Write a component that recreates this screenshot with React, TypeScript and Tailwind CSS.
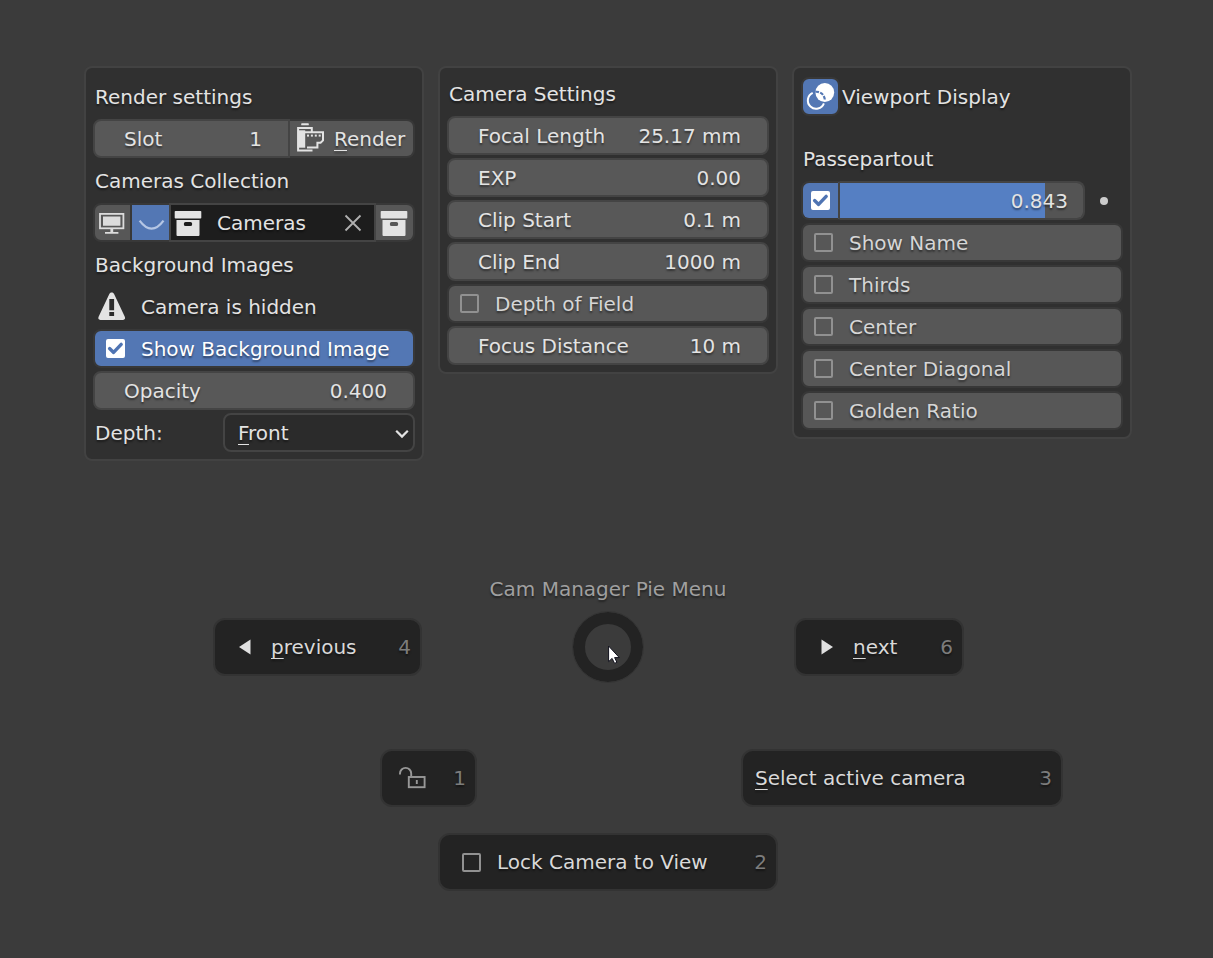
import React, { useState } from "react";
import type { ReactNode } from "react";

const shadow = "[text-shadow:0_2px_2px_rgba(0,0,0,0.45)]";

function Panel({ children, tight = false }: { children: ReactNode; tight?: boolean }) {
  return (
    <section
      className={`rounded-lg border-2 border-[#424242] bg-[#303030] px-[7px] pb-[5px] ${tight ? "pt-[5px]" : "pt-2"}`}
    >
      {children}
    </section>
  );
}

function Row({ children }: { children: ReactNode }) {
  return <div className="flex h-[42px] items-center pb-px">{children}</div>;
}

function Heading({ children }: { children: ReactNode }) {
  return (
    <Row>
      <h2 className="pl-0.5">{children}</h2>
    </Row>
  );
}

function Key({ children }: { children: ReactNode }) {
  return (
    <span className="underline decoration-1 underline-offset-4 [text-decoration-skip-ink:none]">{children}</span>
  );
}

function NumberField({ id, label, value, joined = false }: { id: string; label: string; value: string; joined?: boolean }) {
  const [v, setV] = useState(value);
  return (
    <div
      className={`flex h-[39px] min-w-0 flex-1 items-center border-2 border-[#444444] bg-[#585858] pr-[26px] pl-[29px] ${
        joined ? "rounded-l-lg" : "rounded-lg"
      }`}
    >
      <label htmlFor={id} className="shrink-0">
        {label}
      </label>
      <input
        id={id}
        value={v}
        onChange={(e) => setV(e.target.value)}
        className={`w-0 min-w-0 flex-1 bg-transparent text-right outline-none ${shadow}`}
      />
    </div>
  );
}

function Tick({ id, checked, onChange, label }: { id: string; checked: boolean; onChange: (c: boolean) => void; label?: string }) {
  return (
    <span className="grid size-[19px] shrink-0">
      <input
        id={id}
        type="checkbox"
        aria-label={label}
        checked={checked}
        onChange={(e) => onChange(e.target.checked)}
        className="col-start-1 row-start-1 size-[19px] appearance-none rounded-xs border-2 border-[#919191] checked:border-white checked:bg-white"
      />
      {checked && (
        <svg viewBox="0 0 19 19" className="pointer-events-none col-start-1 row-start-1 size-[19px]" fill="none">
          <path d="M3.6 9.6 7.6 13.4 15.2 5.4" stroke="#4f74b3" strokeWidth="3.4" strokeLinecap="round" strokeLinejoin="round" />
        </svg>
      )}
    </span>
  );
}

function Toggle({ id, label, initial = false }: { id: string; label: string; initial?: boolean }) {
  const [on, setOn] = useState(initial);
  return (
    <label
      htmlFor={id}
      className={`flex h-[39px] flex-1 items-center gap-4 rounded-lg border-2 border-[#383838] pl-[11px] ${
        on ? "bg-[#5377b4] text-white" : "bg-[#575757] text-[#d6d6d6]"
      }`}
    >
      <Tick id={id} checked={on} onChange={setOn} />
      {label}
    </label>
  );
}

function ArchiveIcon() {
  return (
    <svg viewBox="0 0 35 35" className="mx-auto size-[35px] shrink-0" fill="#e3e3e3">
      <rect x="3.7" y="6" width="26.6" height="7.600" rx="0.8" />
      <path
        fillRule="evenodd"
        d="M5.500 15h23v15a1 1 0 0 1-1 1h-21a1 1 0 0 1-1-1zM14.500 17a1.600 1.600 0 0 0-1.600 1.600v.8a1.600 1.600 0 0 0 1.600 1.600h5a1.600 1.600 0 0 0 1.600-1.600v-.8a1.600 1.600 0 0 0-1.600-1.600z"
      />
    </svg>
  );
}

function RenderIcon() {
  return (
    <svg viewBox="0 0 35 35" className="size-[35px] shrink-0">
      <g fill="#e3e3e3">
        <rect x="11.2" y="2.3" width="7.6" height="2" rx="0.6" />
        <rect x="7.6" y="9.3" width="7.6" height="17.4" />
        <rect x="17" y="13.6" width="2" height="2" />
        <rect x="20.900" y="13.600" width="2" height="2" />
        <rect x="24.800" y="13.600" width="2" height="2" />
        <rect x="28.700" y="13.600" width="2" height="2" />
      </g>
      <g fill="none" stroke="#e3e3e3" strokeWidth="2">
        <path d="M21.800 11V7H8.100v22.400h14.400" />
        <path d="M15 11.200h18v8.200l-2.400 2.400h-3.200v4.600H17" />
      </g>
    </svg>
  );
}

function PieButton({
  hotkey,
  label,
  children,
  className = "",
}: {
  hotkey: string;
  label?: string;
  children: ReactNode;
  className?: string;
}) {
  return (
    <button
      type="button"
      aria-label={label}
      className={`flex h-[58px] items-center justify-between rounded-xl border-2 border-[#333333] bg-[#232323] pr-[9px] text-[#d9d9d9] ${shadow} ${className}`}
    >
      <span className="flex items-center">{children}</span>
      <span className="text-[#7c7c7c]">{hotkey}</span>
    </button>
  );
}

function PieToggle() {
  const [on, setOn] = useState(false);
  return (
    <div className="flex h-[58px] w-[340px] items-center justify-between rounded-xl border-2 border-[#333333] bg-[#232323] pr-[9px] pl-[22px] text-[#d9d9d9]">
      <label htmlFor="lock-view" className="flex items-center gap-4">
        <Tick id="lock-view" checked={on} onChange={setOn} />
        Lock Camera to View
      </label>
      <span className="text-[#7c7c7c]">2</span>
    </div>
  );
}

function Passepartout() {
  const [on, setOn] = useState(true);
  const [amount, setAmount] = useState(0.843);
  const pct = `${amount * 100}%`;
  return (
    <Row>
      <label
        htmlFor="passepartout"
        className="flex h-[39px] w-[39px] items-center justify-center rounded-l-lg border-2 border-[#383838] border-r-[#444444] bg-[#5377b4]"
      >
        <Tick id="passepartout" label="Passepartout" checked={on} onChange={setOn} />
      </label>
      <div className="grid h-[39px] flex-1 overflow-hidden rounded-r-lg border-2 border-l-0 border-[#444444] bg-[#545454]">
        <input
          type="range"
          aria-label="Passepartout opacity"
          min={0}
          max={1}
          step={0.001}
          value={amount}
          onChange={(e) => setAmount(Number(e.target.value))}
          style={{ backgroundImage: `linear-gradient(to right, #557fc3 ${pct}, #545454 ${pct})` }}
          className="col-start-1 row-start-1 h-[35px] w-full appearance-none [&::-webkit-slider-thumb]:opacity-0"
        />
        <span className="pointer-events-none col-start-1 row-start-1 self-center pr-[15px] text-right">
          {amount.toFixed(3)}
        </span>
      </div>
      <button type="button" aria-label="Animate property" className="flex h-9 w-[38px] items-center justify-center">
        <span className="size-2 rounded-full bg-[#cccccc]" />
      </button>
    </Row>
  );
}

export default function App() {
  const [name, setName] = useState("Cameras");
  return (
    <main
      className={`min-h-screen bg-[#3b3b3b] pt-[66px] pb-[67px] pl-[3px] font-['DejaVu_Sans',sans-serif] text-[20px] leading-6 text-[#e3e3e3] ${shadow}`}
    >
      <div className="mx-auto grid max-w-[1048px] grid-cols-3 items-start gap-[14px]">
        <Panel>
          <Heading>Render settings</Heading>
          <Row>
            <NumberField id="slot" label="Slot" value="1" joined />
            <button
              type="button"
              className={`flex h-[39px] w-[125px] items-center gap-[9px] rounded-r-lg border-2 border-l-0 border-[#383838] bg-[#575757] ${shadow}`}
            >
              <RenderIcon />
              <span>
                <Key>R</Key>ender
              </span>
            </button>
          </Row>
          <Heading>Cameras Collection</Heading>
          <Row>
            <button
              type="button"
              aria-label="Show in viewport"
              className="h-[39px] w-[39px] rounded-l-lg border-2 border-[#383838] bg-[#575757]"
            >
              <svg viewBox="0 0 35 35" className="size-[35px]">
                <rect x="5" y="8.9" width="23.4" height="14.4" fill="none" stroke="#dcdcdc" strokeWidth="1.8" />
                <path d="M8 11.6h17.4v9.2H8zM15.4 24h2.8v3h-2.8zM10 27h13.4v1.8H10z" fill="#dcdcdc" />
              </svg>
            </button>
            <button
              type="button"
              aria-label="Hide collection"
              className="h-[39px] w-[37px] border-y-2 border-[#383838] bg-[#5377b4]"
            >
              <svg viewBox="0 0 37 35" className="h-[35px] w-[37px]" fill="none">
                <path d="M7.6 15.6C11.6 21 15 23.6 19.5 23.6S27.600 21 31.500 15.600" stroke="#b5c6e4" strokeWidth="2.2" />
              </svg>
            </button>
            <div className="flex h-[39px] min-w-0 flex-1 items-center border-2 border-[#444444] bg-[#1d1d1d] pr-3">
              <ArchiveIcon />
              <input
                aria-label="Collection"
                value={name}
                onChange={(e) => setName(e.target.value)}
                className={`w-0 min-w-0 flex-1 bg-transparent pl-[11px] outline-none ${shadow}`}
              />
              <button type="button" aria-label="Clear collection">
                <svg viewBox="0 0 18 18" className="size-[18px]">
                  <path d="M1.500 1.500 16.500 16.500M16.500 1.500 1.500 16.500" stroke="#b0b0b0" strokeWidth="1.800" />
                </svg>
              </button>
            </div>
            <button
              type="button"
              aria-label="New collection"
              className="h-[39px] w-[39px] rounded-r-lg border-2 border-l-0 border-[#383838] bg-[#575757]"
            >
              <ArchiveIcon />
            </button>
          </Row>
          <Heading>Background Images</Heading>
          <Row>
            <svg viewBox="0 0 36 36" className="ml-px size-9">
              <path
                d="M17.700 3.600c1.200 0 2 .7 2.500 1.600l10.600 22.600c.8 1.700-.1 3.100-1.700 3.100H6.300c-1.600 0-2.500-1.400-1.700-3.100L15.200 5.200c.5-.9 1.300-1.600 2.500-1.600z"
                fill="#e3e3e3"
              />
              <path d="M15.300 10h4.800v11.200h-4.800zM15.300 23h4.800v4h-4.800z" fill="#2b2b2b" />
            </svg>
            <p className="pl-[11px]">Camera is hidden</p>
          </Row>
          <Row>
            <Toggle id="show-bg" label="Show Background Image" initial />
          </Row>
          <Row>
            <NumberField id="opacity" label="Opacity" value="0.400" />
          </Row>
          <Row>
            <label htmlFor="depth" className="flex-1 pl-0.5">
              Depth:
            </label>
            <div className="relative h-[39px] w-48">
              <select
                id="depth"
                className={`h-[39px] w-full appearance-none rounded-lg border-2 border-[#444444] bg-[#2b2b2b] pl-[13px] outline-none ${shadow}`}
              >
                <option>Front</option>
                <option>Back</option>
              </select>
              <span className="pointer-events-none absolute bottom-[7px] left-[15px] h-px w-[11px] bg-[#e3e3e3]" />
              <svg viewBox="0 0 14 10" className="pointer-events-none absolute top-4 right-[6px] h-[10px] w-[14px]" fill="none">
                <path d="M1.200 1.800 7 7.600 12.800 1.800" stroke="#e3e3e3" strokeWidth="2.200" />
              </svg>
            </div>
          </Row>
        </Panel>

        <Panel tight>
          <Heading>Camera Settings</Heading>
          <Row>
            <NumberField id="focal" label="Focal Length" value="25.17 mm" />
          </Row>
          <Row>
            <NumberField id="exp" label="EXP" value="0.00" />
          </Row>
          <Row>
            <NumberField id="clip-start" label="Clip Start" value="0.1 m" />
          </Row>
          <Row>
            <NumberField id="clip-end" label="Clip End" value="1000 m" />
          </Row>
          <Row>
            <Toggle id="dof" label="Depth of Field" />
          </Row>
          <Row>
            <NumberField id="focus" label="Focus Distance" value="10 m" />
          </Row>
        </Panel>

        <Panel>
          <Row>
            <button
              type="button"
              aria-label="Overlays"
              className="size-[39px] shrink-0 rounded-lg border-2 border-[#383838] bg-[#5377b4]"
            >
              <svg viewBox="0 0 35 35" className="size-[35px]">
                <circle cx="21.800" cy="13.500" r="9.400" fill="#ffffff" />
                <path d="M9.700 13.900A8.300 8.300 0 1 0 20.900 24.400" fill="none" stroke="#ffffff" strokeWidth="2" />
                <path
                  d="M12.400 12.800A8.400 8.400 0 0 1 21.800 21.500"
                  fill="none"
                  stroke="#5377b4"
                  strokeWidth="2.200"
                  strokeDasharray="3.600 1.300"
                />
              </svg>
            </button>
            <h2 className="pl-0.5">Viewport Display</h2>
          </Row>
          <div className="pt-5">
            <Heading>Passepartout</Heading>
          </div>
          <Passepartout />
          <Row>
            <Toggle id="show-name" label="Show Name" />
          </Row>
          <Row>
            <Toggle id="thirds" label="Thirds" />
          </Row>
          <Row>
            <Toggle id="center" label="Center" />
          </Row>
          <Row>
            <Toggle id="center-diagonal" label="Center Diagonal" />
          </Row>
          <Row>
            <Toggle id="golden" label="Golden Ratio" />
          </Row>
        </Panel>
      </div>

      <nav aria-label="Cam Manager Pie Menu" className="pt-[116px]">
        <h1 className="text-center text-[#a0a0a0]">Cam Manager Pie Menu</h1>
        <div className="mt-[11px] grid grid-cols-[1fr_auto_1fr] items-center gap-[151px]">
          <PieButton hotkey="4" className="w-[209px] justify-self-end pl-6">
            <svg viewBox="0 0 12 16" className="mr-5 h-4 w-3">
              <path d="M0 8 11.500 0.500v15z" fill="#e0e0e0" />
            </svg>
            <span>
              <Key>p</Key>revious
            </span>
          </PieButton>
          <div className="relative size-[70px] rounded-full border-[12px] border-[#232323] outline-1 outline-[#343434]">
            <svg viewBox="0 0 12 19" className="absolute top-[21px] left-[23px] h-[19px] w-3">
              <path d="M.6 1v15.600l3.500-3.200 2.500 5 2.300-1.100-2.300-4.700h4.700z" fill="#ffffff" stroke="#10101c" />
            </svg>
          </div>
          <PieButton hotkey="6" className="w-[170px] justify-self-start pl-[25px]">
            <svg viewBox="0 0 12 16" className="mr-5 h-4 w-3">
              <path d="M12 8 .5.500v15z" fill="#e0e0e0" />
            </svg>
            <span>
              <Key>n</Key>ext
            </span>
          </PieButton>
        </div>
        <div className="mt-[67px] grid grid-cols-2 gap-[264px] pl-0.5">
          <PieButton hotkey="1" label="Unlock camera" className="w-[97px] justify-self-end pl-4">
            <svg viewBox="0 0 28 24" className="h-6 w-7" fill="none" stroke="#989898" strokeWidth="1.900">
              <path d="M2 8.500V7.500a5.600 5.600 0 0 1 11.200 0V10" />
              <rect x="10.800" y="11" width="15.800" height="10.200" />
              <path d="M18.800 14v4" />
            </svg>
          </PieButton>
          <PieButton hotkey="3" className="w-[322px] justify-self-start pl-3">
            <span>
              <Key>S</Key>elect active camera
            </span>
          </PieButton>
        </div>
        <div className="mt-[26px] flex justify-center">
          <PieToggle />
        </div>
      </nav>
    </main>
  );
}
